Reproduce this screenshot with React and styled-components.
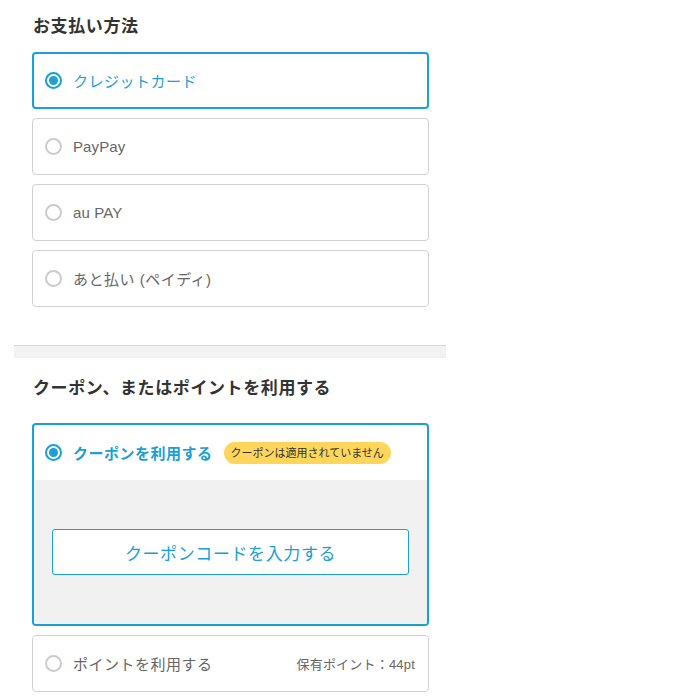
import React from "react";
import styled, { createGlobalStyle } from "styled-components";

const Global = createGlobalStyle`
  html, body { margin: 0; padding: 0; background: #fff; }
  body { font-family: "Liberation Sans", "Noto Sans CJK JP", sans-serif; color: #333; }
`;

const BLUE = "#1aa0d6";

const Page = styled.div`
  width: 432px;
  margin-left: 14px;
`;

const Section = styled.section`
  padding: ${(p) => p.$pt}px 17px ${(p) => p.$pb}px 18px;
`;

const Title = styled.h2`
  margin: 0 0 ${(p) => p.$mb}px 1px;
  font-size: 17px;
  line-height: 22px;
  font-weight: 700;
  color: #333;
  letter-spacing: 0.6px;
`;

const List = styled.div`
  display: flex;
  flex-direction: column;
  gap: ${(p) => p.$gap}px;
`;

const Card = styled.div`
  box-sizing: border-box;
  border: ${(p) => (p.$active ? `2px solid ${BLUE}` : "1px solid #d2d2d2")};
  border-radius: 4px;
  background: #fff;
  overflow: hidden;
`;

const Row = styled.label`
  box-sizing: border-box;
  height: ${(p) => p.$h}px;
  display: flex;
  align-items: center;
  padding: 0 12px 0 ${(p) => (p.$active ? 11 : 12)}px;
  gap: 11px;
  cursor: pointer;
`;

const Radio = styled.span`
  box-sizing: border-box;
  width: 17px;
  height: 17px;
  border-radius: 50%;
  flex: none;
  border: 2px solid ${(p) => (p.$on ? BLUE : "#cccccc")};
  display: flex;
  align-items: center;
  justify-content: center;
  &::after {
    content: "";
    width: 9px;
    height: 9px;
    border-radius: 50%;
    background: ${(p) => (p.$on ? BLUE : "transparent")};
  }
`;

const Label = styled.span`
  font-size: 15px;
  color: ${(p) => (p.$on ? BLUE : "#666")};
  font-weight: ${(p) => (p.$bold ? 700 : 400)};
  letter-spacing: ${(p) => (p.$latin ? 0.1 : 0.5)}px;
`;

const Badge = styled.span`
  background: #ffd65a;
  color: #333;
  font-size: 11px;
  line-height: 22px;
  height: 22px;
  padding: 0 7px;
  border-radius: 11px;
  white-space: nowrap;
`;

const Right = styled.span`
  margin-left: auto;
  margin-right: 1px;
  font-size: 13px;
  color: #666;
  letter-spacing: 0.2px;
`;

const Separator = styled.div`
  border-top: 1px solid #d8d8d8;
  height: 12px;
  background: #f2f2f2;
`;

const CouponBody = styled.div`
  background: #f1f1f1;
  padding: 49px 18px 49px;
`;

const CodeButton = styled.button`
  box-sizing: border-box;
  display: block;
  width: 100%;
  height: 46px;
  border: 1px solid ${BLUE};
  border-radius: 3px;
  background: #fff;
  color: ${BLUE};
  font-family: inherit;
  font-size: 17px;
  letter-spacing: 0.6px;
  cursor: pointer;
`;

const methods = [
  { label: "クレジットカード", on: true },
  { label: "PayPay", latin: true },
  { label: "au PAY", latin: true },
  { label: "あと払い (ペイディ)" },
];

export default function App() {
  return (
    <>
      <Global />
      <Page>
        <Section $pt={16} $pb={38}>
          <Title $mb={14}>お支払い方法</Title>
          <List $gap={9}>
            {methods.map((m) => (
              <Card key={m.label} $active={m.on}>
                <Row $active={m.on} $h={m.on ? 53 : 55}>
                  <Radio $on={m.on} />
                  <Label $on={m.on} $latin={m.latin}>{m.label}</Label>
                </Row>
              </Card>
            ))}
          </List>
        </Section>
        <Separator />
        <Section $pt={20} $pb={0}>
          <Title $mb={23}>クーポン、またはポイントを利用する</Title>
          <List $gap={9}>
            <Card $active>
              <Row $active $h={55}>
                <Radio $on />
                <Label $on $bold>クーポンを利用する</Label>
                <Badge>クーポンは適用されていません</Badge>
              </Row>
              <CouponBody>
                <CodeButton>クーポンコードを入力する</CodeButton>
              </CouponBody>
            </Card>
            <Card>
              <Row $h={55}>
                <Radio />
                <Label>ポイントを利用する</Label>
                <Right>保有ポイント：44pt</Right>
              </Row>
            </Card>
          </List>
        </Section>
      </Page>
    </>
  );
}
